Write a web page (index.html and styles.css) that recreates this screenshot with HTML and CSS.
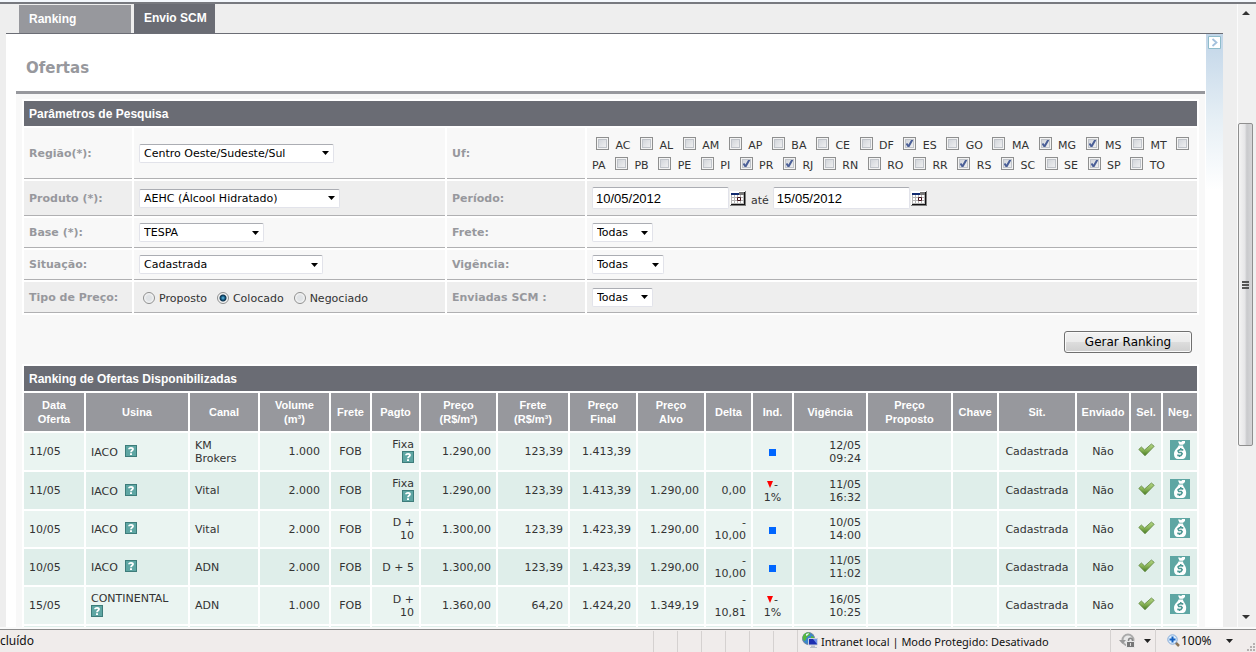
FILE: index.html
```html
<!DOCTYPE html>
<html lang="pt-BR">
<head>
<meta charset="utf-8">
<title>Ofertas</title>
<link rel="stylesheet" href="styles.css">
</head>
<body>
<svg class="sprite" aria-hidden="true">
  <symbol id="help" viewBox="0 0 12 12">
    <path fill="#3d7c7a" d="M0 0h12v12H0z"/><path fill="#5ea6a3" d="M1 1h10v10H1z"/>
    <path fill="none" stroke="#fff" stroke-width="1.8" d="M4 4.2C4 2.4 8 2.4 8 4.3 8 5.7 6 5.5 6 7.3"/><path fill="#fff" d="M5 8.2h2V10H5z"/>
  </symbol>
  <linearGradient id="leaf" x1="0" y1="0" x2="0" y2="1"><stop offset="0" stop-color="#b4d585"/><stop offset="0.5" stop-color="#8ab558"/><stop offset="1" stop-color="#467a20"/></linearGradient>
  <symbol id="tick" viewBox="0 0 17 14">
    <path fill="url(#leaf)" stroke="#5f8540" stroke-width="0.8" stroke-linejoin="round" d="M.8 6.4 3.4 4l3.2 3L13.4 1l2.800 2.300L7 12.800z"/>
  </symbol>
  <symbol id="bag" viewBox="0 0 20 20">
    <path fill="#5ea6a3" d="M0 0h20v20H0z"/>
    <path fill="#fff" d="M8 1.500h2l1 .8 1.200-1.300H15v2l-2 1.700H9.500z"/>
    <path fill="#fff" d="M8.500 5.500h4.500c0 2.500 3.200 4 3.200 8.200 0 3.500-1.600 5.300-3.700 5.300H7.800C5.600 19 4 17.200 4 14c0-4.200 4-6 4.500-8.500z"/>
    <path fill="none" stroke="#4b9692" stroke-width="1.500" d="M12.500 10.800V9.800H9.500L8 11l.8 1.500h2.500l.9 1.300-1.200 1.700H8v-1M10.800 8v2M9.500 15v2"/>
  </symbol>
  <symbol id="calendar" viewBox="0 0 16 15">
    <path fill="#fff" d="M0 0h15v14H0z"/><path fill="#111" d="M14 1h1v13H1v-1h13z"/><path fill="#808080" d="M15 0h1v15H0v-1h15z"/>
    <path fill="#b5b5b5" d="M1 4h13v9H1z"/><path fill="#fff" d="M2 4h2v2H2zM5 4h2v2H5zM8 4h2v2H8zM11 4h2v2h-2zM2 7h2v2H2zM5 7h2v2H5zM11 7h2v2h-2zM2 10h2v2H2zM5 10h2v2H5zM8 10h2v2H8zM11 10h2v2h-2z"/>
    <path fill="#102a70" d="M1 2h8v2H1z"/><path fill="#777" d="M9 1h5v3H9z"/><path fill="#fff" stroke="#401018" d="M7.500 6.500h3v3h-3z"/>
  </symbol>
</svg>

<div class="window">
  <div class="topline"></div>
  <div class="view">
    <main class="page">
      <nav class="tabs">
        <a class="tab" href="#ranking">Ranking</a>
        <a class="tab tab-on" href="#envio">Envio SCM</a>
      </nav>
      <div class="panel">
        <div class="content">
          <h1>Ofertas</h1>
          <form class="body">
            <table class="grid params">
              <colgroup><col class="p1"><col class="p2"><col class="p3"><col class="p4"></colgroup>
              <tr><th class="bar" colspan="4">Parâmetros de Pesquisa</th></tr>
              <tr class="r-uf">
                <th><label for="regiao">Região(*):</label></th>
                <td><select id="regiao" class="w-regiao"><option>Centro Oeste/Sudeste/Sul</option></select></td>
                <th>Uf:</th>
                <td class="ufs">
                  <label><input type="checkbox"> AC</label> <label><input type="checkbox"> AL</label> <label><input type="checkbox"> AM</label> <label><input type="checkbox"> AP</label> <label><input type="checkbox"> BA</label> <label><input type="checkbox"> CE</label> <label><input type="checkbox"> DF</label> <label><input type="checkbox" checked> ES</label> <label><input type="checkbox"> GO</label> <label><input type="checkbox"> MA</label> <label><input type="checkbox" checked> MG</label> <label><input type="checkbox" checked> MS</label> <label><input type="checkbox"> MT</label> <label><input type="checkbox"> PA</label> <label><input type="checkbox"> PB</label> <label><input type="checkbox"> PE</label> <label><input type="checkbox"> PI</label> <label><input type="checkbox" checked> PR</label> <label><input type="checkbox" checked> RJ</label> <label><input type="checkbox"> RN</label> <label><input type="checkbox"> RO</label> <label><input type="checkbox"> RR</label> <label><input type="checkbox" checked> RS</label> <label><input type="checkbox" checked> SC</label> <label><input type="checkbox"> SE</label> <label><input type="checkbox" checked> SP</label> <label><input type="checkbox"> TO</label>
                </td>
              </tr>
              <tr class="r-date alt">
                <th><label for="produto">Produto (*):</label></th>
                <td><select id="produto" class="w-produto"><option>AEHC (Álcool Hidratado)</option></select></td>
                <th><label for="de">Período:</label></th>
                <td><div class="dates">
                  <input id="de" type="text" value="10/05/2012">
                  <button type="button" class="icon" aria-label="Calendário inicial"><svg class="i-cal"><use href="#calendar"/></svg></button>
                  <label for="ate">até</label>
                  <input id="ate" type="text" value="15/05/2012">
                  <button type="button" class="icon" aria-label="Calendário final"><svg class="i-cal"><use href="#calendar"/></svg></button>
                </div></td>
              </tr>
              <tr>
                <th><label for="base">Base (*):</label></th>
                <td><select id="base" class="w-base"><option>TESPA</option></select></td>
                <th><label for="frete">Frete:</label></th>
                <td><select id="frete" class="w-todas"><option>Todas</option></select></td>
              </tr>
              <tr>
                <th><label for="sit">Situação:</label></th>
                <td><select id="sit" class="w-sit"><option>Cadastrada</option></select></td>
                <th><label for="vig">Vigência:</label></th>
                <td><select id="vig" class="w-vig"><option>Todas</option></select></td>
              </tr>
              <tr class="alt r-last">
                <th>Tipo de Preço:</th>
                <td><div class="radios">
                  <label><input type="radio" name="tipo">Proposto</label>
                  <label><input type="radio" name="tipo" checked>Colocado</label>
                  <label><input type="radio" name="tipo">Negociado</label>
                </div></td>
                <th><label for="env">Enviadas SCM :</label></th>
                <td><select id="env" class="w-todas"><option>Todas</option></select></td>
              </tr>
            </table>

            <div class="actions"><button type="button" class="run">Gerar Ranking</button></div>

            <table class="grid offers">
              <colgroup><col class="c1"><col class="c2"><col class="c3"><col class="c4"><col class="c5"><col class="c6"><col class="c7"><col class="c8"><col class="c9"><col class="c9"><col class="c10"><col class="c5"><col class="c11"><col class="c12"><col class="c13"><col class="c14"><col class="c15"><col class="c16"><col class="c17"></colgroup>
              <thead>
                <tr><th class="bar" colspan="19">Ranking de Ofertas Disponibilizadas</th></tr>
                <tr class="heads"><th>Data Oferta</th><th>Usina</th><th>Canal</th><th>Volume<br>(m³)</th><th>Frete</th><th>Pagto</th><th>Preço (R$/m³)</th><th>Frete (R$/m³)</th><th>Preço<br>Final</th><th>Preço<br>Alvo</th><th>Delta</th><th>Ind.</th><th>Vigência</th><th>Preço Proposto</th><th>Chave</th><th>Sit.</th><th>Enviado</th><th>Sel.</th><th>Neg.</th></tr>
              </thead>
              <tbody>
                <tr class="tall"><td>11/05</td><td><span class="mill">IACO</span> <svg class="i-help"><use href="#help"/></svg></td><td>KM<br>Brokers</td><td class="num vol">1.000</td><td class="mid">FOB</td><td class="num">Fixa <svg class="i-help"><use href="#help"/></svg></td><td class="num">1.290,00</td><td class="num">123,39</td><td class="num">1.413,39</td><td></td><td></td><td class="mid"><span class="flat"></span></td><td class="num">12/05 09:24</td><td></td><td></td><td class="mid">Cadastrada</td><td class="mid">Não</td><td class="mid act"><button type="button" class="icon" aria-label="Selecionar"><svg class="i-tick"><use href="#tick"/></svg></button></td><td class="mid act"><button type="button" class="icon" aria-label="Negociar"><svg class="i-bag"><use href="#bag"/></svg></button></td></tr>
                <tr class="tall alt"><td>11/05</td><td><span class="mill">IACO</span> <svg class="i-help"><use href="#help"/></svg></td><td>Vital</td><td class="num vol">2.000</td><td class="mid">FOB</td><td class="num">Fixa <svg class="i-help"><use href="#help"/></svg></td><td class="num">1.290,00</td><td class="num">123,39</td><td class="num">1.413,39</td><td class="num">1.290,00</td><td class="num">0,00</td><td class="mid"><span class="down"></span>-<br>1%</td><td class="num">11/05 16:32</td><td></td><td></td><td class="mid">Cadastrada</td><td class="mid">Não</td><td class="mid act"><button type="button" class="icon" aria-label="Selecionar"><svg class="i-tick"><use href="#tick"/></svg></button></td><td class="mid act"><button type="button" class="icon" aria-label="Negociar"><svg class="i-bag"><use href="#bag"/></svg></button></td></tr>
                <tr><td>10/05</td><td><span class="mill">IACO</span> <svg class="i-help"><use href="#help"/></svg></td><td>Vital</td><td class="num vol">2.000</td><td class="mid">FOB</td><td class="num">D +<br>10</td><td class="num">1.300,00</td><td class="num">123,39</td><td class="num">1.423,39</td><td class="num">1.290,00</td><td class="num">-<br>10,00</td><td class="mid"><span class="flat"></span></td><td class="num">10/05 14:00</td><td></td><td></td><td class="mid">Cadastrada</td><td class="mid">Não</td><td class="mid act"><button type="button" class="icon" aria-label="Selecionar"><svg class="i-tick"><use href="#tick"/></svg></button></td><td class="mid act"><button type="button" class="icon" aria-label="Negociar"><svg class="i-bag"><use href="#bag"/></svg></button></td></tr>
                <tr class="alt"><td>10/05</td><td><span class="mill">IACO</span> <svg class="i-help"><use href="#help"/></svg></td><td>ADN</td><td class="num vol">2.000</td><td class="mid">FOB</td><td class="num">D + 5</td><td class="num">1.300,00</td><td class="num">123,39</td><td class="num">1.423,39</td><td class="num">1.290,00</td><td class="num">-<br>10,00</td><td class="mid"><span class="flat"></span></td><td class="num">11/05 11:02</td><td></td><td></td><td class="mid">Cadastrada</td><td class="mid">Não</td><td class="mid act"><button type="button" class="icon" aria-label="Selecionar"><svg class="i-tick"><use href="#tick"/></svg></button></td><td class="mid act"><button type="button" class="icon" aria-label="Negociar"><svg class="i-bag"><use href="#bag"/></svg></button></td></tr>
                <tr class="tall"><td>15/05</td><td><span class="mill">CONTINENTAL</span> <svg class="i-help"><use href="#help"/></svg></td><td>ADN</td><td class="num vol">1.000</td><td class="mid">FOB</td><td class="num">D +<br>10</td><td class="num">1.360,00</td><td class="num">64,20</td><td class="num">1.424,20</td><td class="num">1.349,19</td><td class="num">-<br>10,81</td><td class="mid"><span class="down"></span>-<br>1%</td><td class="num">16/05 10:25</td><td></td><td></td><td class="mid">Cadastrada</td><td class="mid">Não</td><td class="mid act"><button type="button" class="icon" aria-label="Selecionar"><svg class="i-tick"><use href="#tick"/></svg></button></td><td class="mid act"><button type="button" class="icon" aria-label="Negociar"><svg class="i-bag"><use href="#bag"/></svg></button></td></tr>
                <tr class="alt"><td></td><td></td><td></td><td></td><td></td><td></td><td></td><td></td><td></td><td></td><td></td><td></td><td></td><td></td><td></td><td></td><td></td><td></td><td></td></tr>
              </tbody>
            </table>
          </form>
        </div>
        <aside class="side">
          <button type="button" class="icon expand" aria-label="Expandir"><svg viewBox="0 0 13 13" width="13" height="13"><path fill="#fff" stroke="#8fbccb" d="M.5.5h12v12H.5z"/><path fill="none" stroke="#a3c0dc" stroke-width="1.800" d="M4.500 3 8.500 6.500l-4 3.500"/></svg></button>
        </aside>
      </div>
    </main>
    <div class="scroll">
      <svg class="arrow" viewBox="0 0 8 4" width="8" height="4"><path fill="#333" d="M4 0l4 4H0z"/></svg>
      <div class="track"><div class="thumb"><i></i><i></i><i></i></div></div>
      <svg class="arrow" viewBox="0 0 8 4" width="8" height="4"><path fill="#333" d="M0 0h8L4 4z"/></svg>
    </div>
  </div>
  <footer class="status">
    <span class="done">cluído</span>
    <span class="slot"></span><span class="slot"></span><span class="slot"></span><span class="slot"></span><span class="slot"></span><span class="slot"></span>
    <span class="zone">
      <svg viewBox="0 0 16 16" width="16" height="16"><circle cx="6.500" cy="6.500" r="6" fill="#3c86cc" stroke="#77889a"/><path fill="#55b83c" d="M3 1.500C6-.5 9 1 8 3L5 5 3 9C0 8 0 4 3 1.500zM9 4l3 1v3l-3-1z"/><path fill="#dff0ff" d="M4 2l3-1-1 2-2 1z"/><path fill="#1d2fb0" stroke="#c9d0dc" d="M6.500 6.500h9v6.500h-9z"/><path fill="#6f90ea" d="M11 7h4v5z"/><path fill="#b9bfc8" d="M9 13.500h4V15h2v1H8v-1h1z"/></svg>
      Intranet local | Modo Protegido: Desativado
    </span>
    <span class="lock">
      <svg viewBox="0 0 17 16" width="17" height="16"><circle cx="9" cy="7" r="5.500" fill="#e8e8e8" stroke="#aaa" stroke-width="2"/><path fill="#999" d="M0 7h7L3.500 11z"/><path fill="none" stroke="#888" stroke-width="1.500" d="M9.500 9V7.500c0-3 4-3 4 0V9"/><path fill="#777" stroke="#e8e8e8" d="M7.500 8.500h8v6h-8z"/><path fill="#ddd" d="M11 10h1v3h-1z"/></svg>
      <svg class="caret" viewBox="0 0 7 4" width="7" height="4"><path fill="#222" d="M0 0h7L3.500 4z"/></svg>
    </span>
    <span class="zoom">
      <svg viewBox="0 0 13 13" width="13" height="13"><path stroke="#8b7458" stroke-width="2.500" d="M8.500 8.500l3.500 3.500"/><circle cx="5.500" cy="5.500" r="4.700" fill="#dcecfb" stroke="#80a8d8"/><path fill="none" stroke="#1560c0" stroke-width="2" d="M5.500 2.500v6M2.500 5.500h6"/></svg>
      <span>100%</span>
      <svg class="caret" viewBox="0 0 7 4" width="7" height="4"><path fill="#222" d="M0 0h7L3.500 4z"/></svg>
      <svg class="grip" viewBox="0 0 9 9" width="9" height="9"><path fill="#b5b0b0" d="M6 0h2v2H6zM3 3h2v2H3zM6 3h2v2H6zM0 6h2v2H0zM3 6h2v2H3zM6 6h2v2H6z"/></svg>
    </span>
  </footer>
</div>
</body>
</html>
```
FILE: styles.css
```css
* { box-sizing: border-box; }
body {
  margin: 0;
  background: #eee;
  color: #333;
  font: 11px/13px "DejaVu Sans", Verdana, sans-serif;
}
.sprite { position: absolute; width: 0; height: 0; }
.window { display: flex; flex-direction: column; height: 100vh; overflow: hidden; }
.topline { flex: none; height: 4px; background: #f4f8fd; border-bottom: 2px solid #77797f; }
.view { flex: 1; min-height: 0; display: flex; overflow: hidden; }
.page { flex: 1; min-width: 0; padding: 0 14px 0 6px; overflow: hidden; }

/* tabs */
.tabs { display: flex; align-items: flex-end; gap: 3px; height: 30px; padding-left: 13px; border-bottom: 1px solid #6b6d75; }
.tab {
  width: 112px; height: 28px; padding: 0 10px;
  background: #97989d; color: #fff;
  font: bold 12px/28px "Liberation Sans", Arial, sans-serif;
  text-decoration: none; white-space: nowrap;
}
.tab-on { width: 81px; height: 29px; background: #6a6c74; }

/* panel */
.panel { display: flex; background: #fff; }
.content { flex: 1; min-width: 0; padding: 0 1px 0 10px; }
.side { width: 17px; height: 156px; padding: 2px; background: linear-gradient(#c1d5e8, #e6eff5 55%, #fff); }
h1 {
  margin: 0; padding: 24px 10px 14px; height: 60px;
  border-bottom: 3px solid #97989d;
  color: #97989d; font-size: 15px; line-height: 20px;
}
.body { padding: 5px 6px; background: #f8f8f8; }

.grid { width: 100%; table-layout: fixed; border-collapse: separate; border-spacing: 2px; background: #fff; }
.grid .bar {
  height: 25px; padding: 0 5px; border: 0;
  background: #6a6c74; color: #fff; text-align: left;
  font: bold 12px/14px "Liberation Sans", Arial, sans-serif;
}

/* search parameters */
.p1 { width: 108px; } .p2 { width: 311px; } .p3 { width: 138px; } .p4 { width: 610px; }
.params th, .params td { height: 30px; padding: 0 5px; background: #f8f8f8; border-bottom: 1px solid #b0b0b2; }
.params .alt th, .params .alt td { background: #eee; }
.params th { color: #97989d; text-align: left; }
.params .r-uf > * { height: 51px; }
.params .r-date > * { height: 35px; }
.params .r-last > * { height: 31px; }

select {
  display: block; height: 19px; padding: 0 4px;
  appearance: none;
  border: 1px solid #e2e3ea; border-top-color: #abadb3; border-radius: 2px;
  background: #fff url("data:image/svg+xml,%3Csvg xmlns='http://www.w3.org/2000/svg' width='7' height='4'%3E%3Cpath d='M0 0h7L3.500 4z'/%3E%3C/svg%3E") no-repeat right 4px center;
  color: #000; font: 11px/17px "DejaVu Sans", Verdana, sans-serif;
}
.w-regiao { width: 195px; }
.w-produto { width: 201px; }
.w-base { width: 125px; }
.w-sit { width: 184px; }
.w-todas { width: 61px; }
.w-vig { width: 72px; }

.params .ufs { padding: 5px 0 0 5px; line-height: 20px; }
.ufs label { padding-right: 2px; }
.ufs input {
  width: 13px; height: 13px; margin: 0 3px 0 4px; vertical-align: -1px;
  appearance: none;
  border: 1px solid #8e8f8f;
  box-shadow: inset 0 0 0 1px #f4f4f4, inset 0 0 0 2px #c0c4ca;
  background: linear-gradient(135deg, #cbcfd5, #f6f6f6);
}
.ufs input:checked {
  background: url("data:image/svg+xml,%3Csvg xmlns='http://www.w3.org/2000/svg' width='11' height='11'%3E%3Cpath d='M2.500 5.500 4.500 8.500 8.500 1.500' fill='none' stroke='%234a5f97' stroke-width='2'/%3E%3C/svg%3E") no-repeat, linear-gradient(135deg, #cbcfd5, #f6f6f6);
}

.dates { display: flex; align-items: center; }
.dates input {
  width: 137px; height: 22px; padding: 0 3px;
  border: 1px solid #e2e3ea; border-top-color: #abadb3; border-radius: 2px;
  background: #fff; color: #000; font: 13px/20px "Liberation Sans", Arial, sans-serif;
}
.dates label { padding: 4px 4px 0 5px; }
.icon { padding: 0; border: 0; background: none; }
.icon svg { display: block; }
.dates .icon { margin-left: 1px; }
.i-cal { width: 16px; height: 15px; }

.radios { display: flex; gap: 10px; padding: 2px 4px 0; }
.radios label { display: flex; align-items: center; gap: 4px; }
.radios input {
  width: 12px; height: 12px; margin: 0;
  appearance: none; border: 1px solid #8e8f8f; border-radius: 50%;
  background: radial-gradient(#e0e3e6 35%, #f8f8f8 75%);
}
.radios input:checked { background: radial-gradient(circle at 50% 50%, #6cc4e8, #10557f 2px, #12354e 3px, #f4f4f4 4px); }

.actions { display: flex; justify-content: flex-end; padding: 16px 7px 11px; }
.run {
  width: 128px; height: 22px; padding: 0;
  border: 1px solid #707070; border-radius: 3px;
  box-shadow: inset 0 0 0 1px #fafafa;
  background: linear-gradient(#f2f2f2, #ebebeb 50%, #dddddd 50%, #cfcfcf);
  color: #000; font: 12px/20px "DejaVu Sans", Verdana, sans-serif;
}

/* offers */
.c1 { width: 60px; } .c2 { width: 102px; } .c3 { width: 68px; } .c4 { width: 69px; } .c5 { width: 39px; }
.c6 { width: 47px; } .c7 { width: 75px; } .c8 { width: 70px; } .c9 { width: 66px; } .c10 { width: 45px; }
.c11 { width: 72px; } .c12 { width: 83px; } .c13 { width: 44px; } .c14 { width: 76px; } .c15 { width: 52px; }
.c16 { width: 30px; } .c17 { width: 34px; }
.heads th {
  height: 38px; padding: 0 2px;
  background: #97989d; color: #fff;
  font: bold 11px/14px "Liberation Sans", Arial, sans-serif;
}
.offers td { height: 36px; padding: 0 5px; background: #eaf4f1; }
.offers .alt td { background: #dfeeea; }
.offers .tall td { height: 37px; }
.offers .num { text-align: right; }
.offers td.vol { padding-right: 9px; }
.offers .mid { padding: 0; text-align: center; }
.offers .act { padding-bottom: 3px; }
.offers td:nth-child(13) { padding-left: 30px; }
.mill { padding-right: 4px; }
.i-help { width: 12px; height: 12px; vertical-align: -1px; }
.i-tick { width: 17px; height: 14px; }
.i-bag { width: 20px; height: 20px; }
.offers .icon { display: block; margin: 0 auto; }
.flat { display: inline-block; width: 7px; height: 7px; background: #06f; vertical-align: -1px; }
.down { display: inline-block; margin-right: 1px; border: 3px solid transparent; border-top: 7px solid #f00; border-bottom: 0; }

/* scrollbar */
.scroll { flex: none; width: 19px; display: flex; flex-direction: column; align-items: center; padding: 7px 3px 8px 0; background: #f0f0f0; border-left: 1px solid #fbfbfb; }
.track { flex: 1; width: 100%; padding: 108px 0 0; }
.thumb {
  width: 15px; height: 323px;
  display: flex; flex-direction: column; align-items: center; justify-content: center; gap: 1px;
  border: 1px solid #8f8f8f; border-radius: 2px;
  background: linear-gradient(90deg, #f4f4f4, #e6e6e8 45%, #c9cacd 60%, #d6d6d8);
}
.thumb i { width: 7px; height: 2px; background: #555; }

/* status bar */
.status {
  flex: none; display: flex; align-items: stretch; height: 25px;
  border-top: 2px solid #fafafa; background: #f0eceb;
  box-shadow: inset 0 1px #8c8c8c;
  color: #111; font: 12px/24px "Noto Sans", "Segoe UI", sans-serif;
}
.done { flex: 1; }
.slot { width: 24px; border-left: 1px solid #d5d1d0; margin-top: 2px; }
.zone { display: flex; gap: 3px; width: 313px; padding-left: 4px; border-left: 1px solid #d5d1d0; margin-top: 1px; font-size: 11px; white-space: nowrap; }
.zone svg { margin-top: 2px; }
.lock { display: flex; align-items: center; gap: 8px; width: 45px; padding-left: 8px; border-left: 1px solid #d5d1d0; }
.zoom { position: relative; display: flex; align-items: center; width: 101px; padding-left: 11px; border-left: 1px solid #d5d1d0; }
.zoom span { margin: 0 14px 0 1px; }
.grip { position: absolute; right: 0; bottom: 0; }
```
